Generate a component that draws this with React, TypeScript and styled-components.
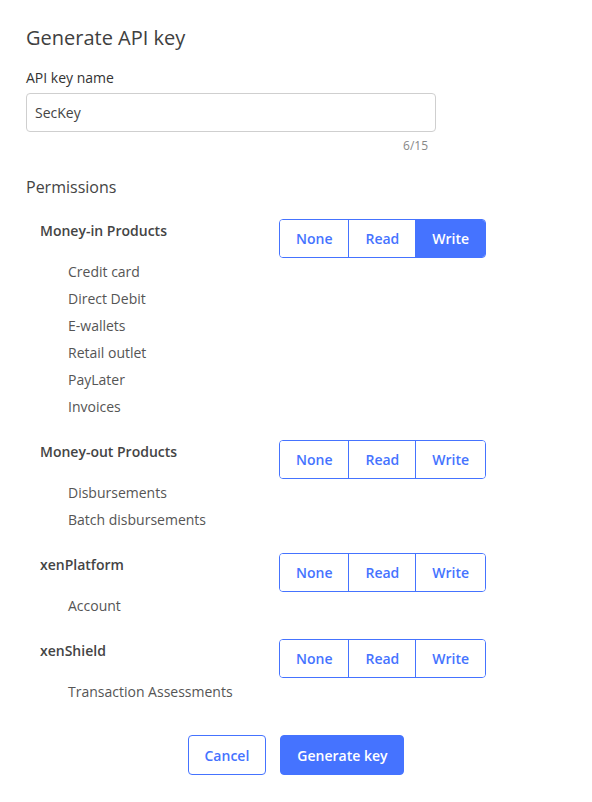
import React, { useState } from 'react';
import styled, { createGlobalStyle } from 'styled-components';

const GlobalStyle = createGlobalStyle`
  body {
    margin: 0;
    background: #fff;
    font-family: "Open Sans", "Noto Sans", sans-serif;
    color: #333;
  }
`;

const Page = styled.div`
  width: 592px;
  padding: 24px 26px 26px;
  box-sizing: border-box;
`;

const Title = styled.h2`
  margin: 0 0 16px;
  font-size: 20px;
  line-height: 28px;
  font-weight: 500;
  color: #404040;
`;

const FieldLabel = styled.label`
  display: block;
  font-size: 14px;
  line-height: 20px;
  font-weight: 500;
  color: #333;
  margin-bottom: 5px;
`;

const TextInput = styled.input`
  display: block;
  width: 410px;
  height: 39px;
  box-sizing: border-box;
  border: 1px solid #cfcfcf;
  border-radius: 4px;
  padding: 0 8px;
  font-family: inherit;
  font-size: 14px;
  color: #444;
  outline: none;
`;

const Counter = styled.div`
  width: 410px;
  box-sizing: border-box;
  padding-right: 8px;
  text-align: right;
  font-size: 12px;
  line-height: 16px;
  color: #888;
  margin-top: 6px;
`;

const SectionTitle = styled.h3`
  margin: 22px 0 21px;
  font-size: 16px;
  line-height: 22px;
  font-weight: 500;
  color: #444;
`;

const Group = styled.section`
  margin-left: 14px;
  & + & {
    margin-top: 20px;
  }
`;

const GroupHead = styled.div`
  display: grid;
  grid-template-columns: 239px auto;
  align-items: start;
`;

const GroupName = styled.div`
  padding-top: 2px;
  font-size: 14px;
  line-height: 20px;
  font-weight: 600;
  color: #444;
`;

const Segmented = styled.div`
  display: inline-flex;
  border: 1px solid #4573ff;
  border-radius: 4px;
  overflow: hidden;
  justify-self: start;
`;

const Segment = styled.button<{ $active: boolean }>`
  height: 37px;
  padding: 0 16px;
  border: none;
  border-left: 1px solid #4573ff;
  &:first-child {
    border-left: none;
  }
  background: ${p => (p.$active ? '#4573ff' : '#fff')};
  color: ${p => (p.$active ? '#fff' : '#4573ff')};
  font-family: inherit;
  font-size: 14px;
  font-weight: 600;
  cursor: pointer;
`;

const Items = styled.ul`
  list-style: none;
  margin: 0;
  padding: 0 0 0 28px;
`;

const Item = styled.li`
  font-size: 14px;
  line-height: 27px;
  color: #555;
`;

const Footer = styled.div`
  display: flex;
  justify-content: center;
  gap: 14px;
  margin-top: 30px;
`;

const ActionButton = styled.button<{ $primary?: boolean }>`
  height: 40px;
  padding: 0 16px;
  border-radius: 4px;
  border: 1px solid #4573ff;
  background: ${p => (p.$primary ? '#4573ff' : '#fff')};
  color: ${p => (p.$primary ? '#fff' : '#4573ff')};
  font-family: inherit;
  font-size: 14px;
  font-weight: 600;
  cursor: pointer;
`;

type Level = 'None' | 'Read' | 'Write';

const groups: { name: string; items: string[]; level: Level }[] = [
  {
    name: 'Money-in Products',
    items: ['Credit card', 'Direct Debit', 'E-wallets', 'Retail outlet', 'PayLater', 'Invoices'],
    level: 'Write',
  },
  { name: 'Money-out Products', items: ['Disbursements', 'Batch disbursements'], level: 'None' },
  { name: 'xenPlatform', items: ['Account'], level: 'None' },
  { name: 'xenShield', items: ['Transaction Assessments'], level: 'None' },
];

const levels: Level[] = ['None', 'Read', 'Write'];

const App = () => {
  const [name, setName] = useState('SecKey');
  const [perms, setPerms] = useState<Level[]>(groups.map(g => g.level));
  // only the first group shows a filled choice in the design
  const [touched, setTouched] = useState<boolean[]>([true, false, false, false]);

  const pick = (i: number, l: Level) => {
    setPerms(p => p.map((v, j) => (j === i ? l : v)));
    setTouched(t => t.map((v, j) => (j === i ? true : v)));
  };

  return (
    <Page>
      <GlobalStyle />
      <Title>Generate API key</Title>
      <FieldLabel htmlFor="key-name">API key name</FieldLabel>
      <TextInput id="key-name" value={name} maxLength={15} onChange={e => setName(e.target.value)} />
      <Counter>{name.length}/15</Counter>
      <SectionTitle>Permissions</SectionTitle>
      {groups.map((g, i) => (
        <Group key={g.name}>
          <GroupHead>
            <GroupName>{g.name}</GroupName>
            <Segmented>
              {levels.map(l => (
                <Segment key={l} $active={touched[i] && perms[i] === l} onClick={() => pick(i, l)}>
                  {l}
                </Segment>
              ))}
            </Segmented>
          </GroupHead>
          <Items>
            {g.items.map(it => (
              <Item key={it}>{it}</Item>
            ))}
          </Items>
        </Group>
      ))}
      <Footer>
        <ActionButton>Cancel</ActionButton>
        <ActionButton $primary>Generate key</ActionButton>
      </Footer>
    </Page>
  );
};

export default App;
